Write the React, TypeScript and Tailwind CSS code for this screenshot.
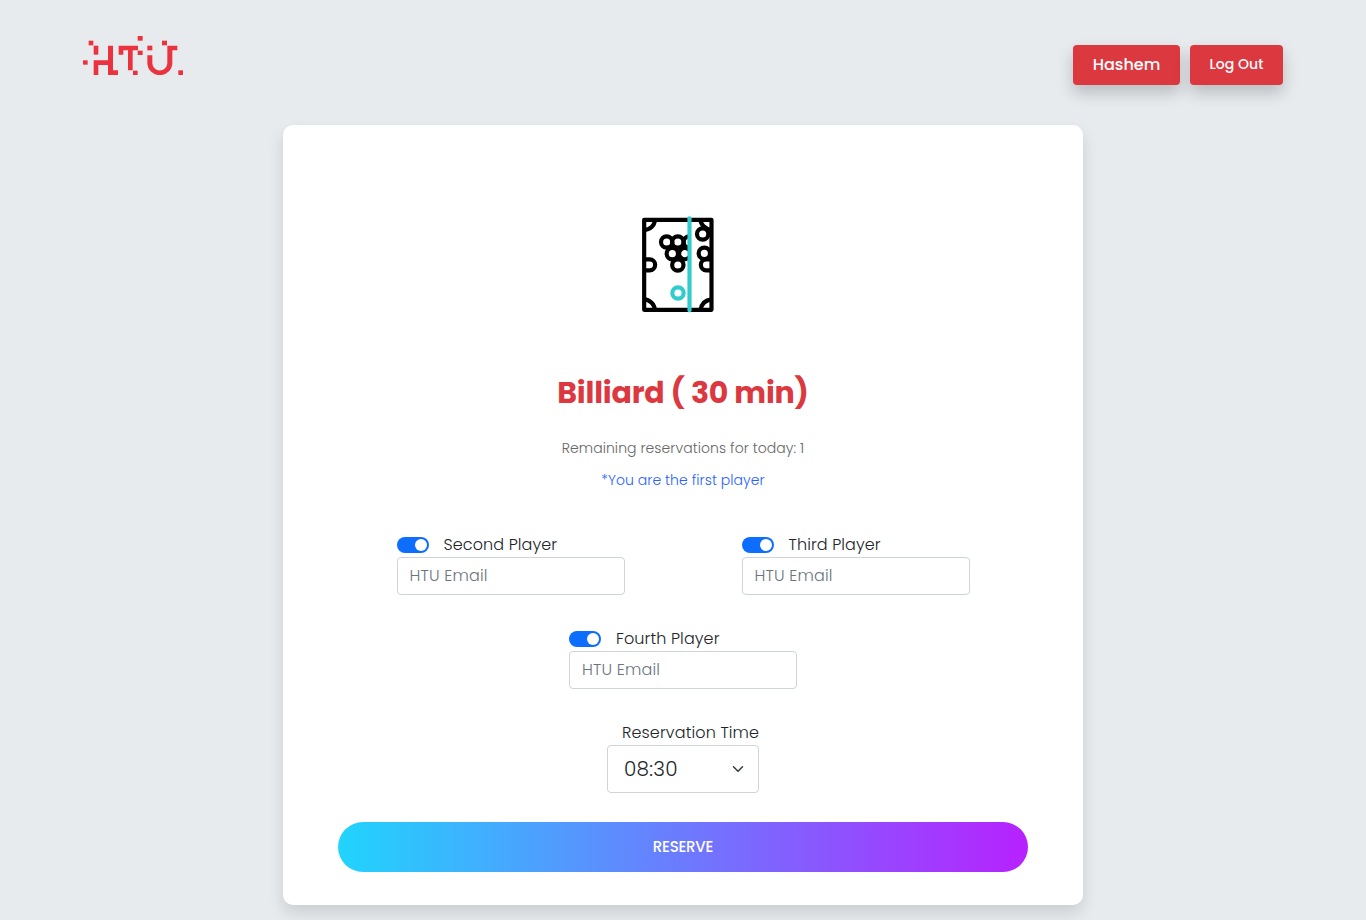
import React from 'react';

function Logo() {
  return (
    <svg width="101" height="40" viewBox="39 28 303 120" fill="#eb333f" aria-label="HTU">
      <rect x="56" y="45" width="14" height="14" />
      <rect x="39" y="104" width="14" height="13" />
      <rect x="71" y="60" width="14" height="27" />
      <path d="M71 104H114V60H129V134H144V148H114V118H85V148H71Z" />
      <path d="M146 60H204V74H188V134H174V74H160V87H146Z" />
      <rect x="189" y="135" width="14" height="13" />
      <rect x="203" y="31" width="15" height="14" />
      <rect x="203" y="75" width="15" height="13" />
      <rect x="232" y="60" width="15" height="14" />
      <rect x="276" y="45" width="15" height="14" />
      <path d="M232 89H247V112A22.500 22.500 0 0 0 292 112V60H322V74H307V111A37.500 37.500 0 0 1 232 111Z" />
      <rect x="325" y="134" width="14" height="14" />
    </svg>
  );
}

function BilliardTable() {
  return (
    <svg width="72" height="97" viewBox="36 32 216 291" fill="none" stroke="#000" strokeWidth="12.5" className="block">
      <rect x="42.500" y="43.500" width="202" height="270" strokeLinejoin="round" />
      <path d="M42 74C60 73 74 61 75 43M211 43C212 57 225 72 245 74M42 282C59 283 73 296 75 314M212 314C214 296 226 284 245 282" />
      <path d="M42 162H59A16 16 0 0 1 59 195H42M245 162H229A16 16 0 0 0 229 195H245" />
      <circle cx="218" cy="86" r="17" />
      <circle cx="223" cy="144" r="17" />
      <circle cx="110" cy="110" r="17" />
      <circle cx="143.500" cy="110" r="17" />
      <path d="M178 93A17 17 0 0 0 178 127M178 135A17 17 0 1 0 178 155" />
      <circle cx="127" cy="145" r="17" />
      <circle cx="143.500" cy="179" r="17" />
      <circle cx="144" cy="263" r="17" stroke="#33cccc" />
      <path d="M178.500 39V315" stroke="#33cccc" strokeLinecap="round" />
    </svg>
  );
}

function Player({ label }: { label: string }) {
  return (
    <div className="w-[228px]">
      <label className="flex h-6 items-center">
        <span className="flex h-4 w-8 items-center justify-end rounded-full bg-[#0d6efd] pr-[2px]">
          <span className="size-3 rounded-full bg-white" />
        </span>
        <span className="ml-[15px] whitespace-nowrap text-base leading-6 tracking-[0.1px] text-[#212529]">{label}</span>
      </label>
      <input
        type="email"
        placeholder="HTU Email"
        className="block h-[38px] w-full rounded border border-[#ced4da] bg-white px-3 pb-[2px] text-base font-light tracking-[0.15px] placeholder:text-[#6c757d] outline-none"
      />
    </div>
  );
}

export default function App() {
  return (
    <div className="h-[920px] overflow-hidden bg-[#e7ebee] font-['Poppins','Inter',sans-serif] font-light text-[#212529]">
      <header className="flex h-[125px] items-start justify-between px-[83px]">
        <div className="pt-[35px]"><Logo /></div>
        <nav className="flex gap-[10px] pt-[45px] font-medium text-white">
          <button className="h-10 w-[107px] rounded bg-[#db383f] text-base tracking-[0px] shadow-[0_8px_16px_rgba(0,0,0,0.2)]">Hashem</button>
          <button className="h-10 w-[93px] rounded bg-[#db383f] pb-[2px] text-sm tracking-[0.05px] shadow-[0_8px_16px_rgba(0,0,0,0.2)]">Log Out</button>
        </nav>
      </header>
      <main className="mx-auto flex h-[780px] w-[800px] flex-col items-center rounded-[10px] bg-white pt-[91px] shadow-[0_8px_16px_rgba(0,0,0,0.12)]">
        <div className="mr-[10px] h-[97px]"><BilliardTable /></div>
        <h1 className="mt-[56px] h-12 whitespace-nowrap text-[30px] font-bold leading-[48px] tracking-[-0.2px] text-[#db383f]">Billiard ( 30 min)</h1>
        <p className="mt-5 h-[22px] whitespace-nowrap text-sm leading-[22px] tracking-[0.06px] text-[#666]">Remaining reservations for today: 1</p>
        <p className="mt-[10px] h-[22px] whitespace-nowrap text-sm leading-[22px] tracking-[0.06px] text-[#2962ff]">*You are the first player</p>
        <div className="mt-[42px] flex gap-[117px]">
          <Player label="Second Player" />
          <Player label="Third Player" />
        </div>
        <div className="mt-8"><Player label="Fourth Player" /></div>
        <div className="mt-8 w-[152px]">
          <div className="ml-[15px] h-6 whitespace-nowrap text-base leading-6 tracking-[0.12px]">Reservation Time</div>
          <button className="flex h-12 w-full items-center justify-between rounded border border-[#ced4da] pl-4 pr-[12px] text-xl font-light tracking-[0.25px]">
            <span>08:30</span>
            <svg width="16" height="12" viewBox="0 0 16 16" fill="none" stroke="#343a40" strokeWidth="2" strokeLinecap="round" strokeLinejoin="round"><path d="m2 5 6 6 6-6" /></svg>
          </button>
        </div>
        <button className="mt-[29px] h-[50px] w-[690px] shrink-0 rounded-full bg-[linear-gradient(to_right,#21d4fd,#b721ff)] text-[15px] font-medium tracking-[-0.25px] text-white">RESERVE</button>
      </main>
    </div>
  );
}
